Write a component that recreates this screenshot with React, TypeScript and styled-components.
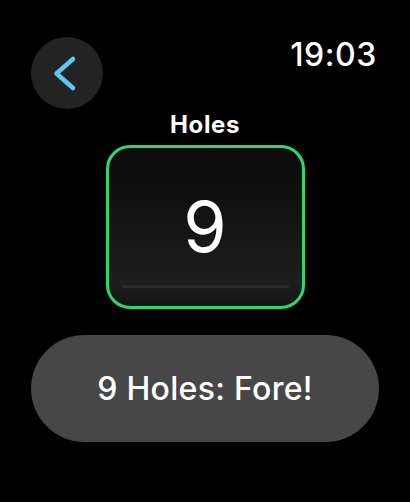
import styled, { createGlobalStyle } from "styled-components";

const GlobalStyle = createGlobalStyle`
  * {
    box-sizing: border-box;
  }

  html,
  body {
    margin: 0;
    padding: 0;
    background: #000;
  }

  body {
    font-family: Inter, "Noto Sans", sans-serif;
    color: #fff;
  }
`;

const Screen = styled.div`
  width: 410px;
  height: 502px;
  display: flex;
  flex-direction: column;
  align-items: center;
  background: #000;
`;

const Header = styled.div`
  width: 100%;
  height: 73px;
  margin-top: 37px;
  padding: 0 33px 0 31px;
  display: flex;
  justify-content: space-between;
  align-items: flex-start;
`;

const BackButton = styled.button`
  width: 72px;
  height: 72px;
  padding: 0;
  border: none;
  border-radius: 50%;
  background: #232323;
  display: flex;
  align-items: center;
  justify-content: center;
  cursor: pointer;
`;

const Time = styled.div`
  margin-top: -2px;
  font-size: 32px;
  line-height: 40px;
  font-weight: 500;
  letter-spacing: 0.6px;
`;

const Label = styled.div`
  margin-top: 0;
  font-size: 24px;
  line-height: 29px;
  font-weight: 700;
  letter-spacing: 0.6px;
`;

const Picker = styled.div`
  margin-top: 6px;
  width: 199px;
  height: 164px;
  border: 3px solid #2ed573;
  border-radius: 24px;
  background: linear-gradient(
    180deg,
    #0b0b0c 0%,
    #111112 35%,
    #1a1a1b 70%,
    #1e1e1e 85%,
    #141414 100%
  );
  display: flex;
  flex-direction: column;
  align-items: center;
  padding: 0 13px;
`;

const Value = styled.div`
  flex: 1;
  display: flex;
  align-items: center;
  padding-top: 20px;
  font-size: 70px;
  font-weight: 400;
  line-height: 1;
`;

const Track = styled.div`
  width: 100%;
  height: 3px;
  margin-bottom: 18px;
  border-radius: 2px;
  background: #2b2b2c;
`;

const ActionButton = styled.button`
  margin-top: 26px;
  width: 348px;
  height: 107px;
  border: none;
  border-radius: 54px;
  background: #474747;
  color: #fff;
  font-family: Inter, "Noto Sans", sans-serif;
  font-size: 32px;
  font-weight: 500;
  letter-spacing: 0.3px;
  cursor: pointer;
`;

const Chevron = () => (
  <svg width="72" height="72" viewBox="0 0 72 72" fill="none">
    <polyline
      points="42,22 25.5,36.5 42,51"
      stroke="#5ac8f5"
      strokeWidth="4.5"
      strokeLinecap="round"
      strokeLinejoin="round"
    />
  </svg>
);

const App = () => {
  return (
    <>
      <GlobalStyle />
      <Screen>
        <Header>
          <BackButton aria-label="Back">
            <Chevron />
          </BackButton>
          <Time>19:03</Time>
        </Header>
        <Label>Holes</Label>
        <Picker>
          <Value>9</Value>
          <Track />
        </Picker>
        <ActionButton>9 Holes: Fore!</ActionButton>
      </Screen>
    </>
  );
};

export default App;
